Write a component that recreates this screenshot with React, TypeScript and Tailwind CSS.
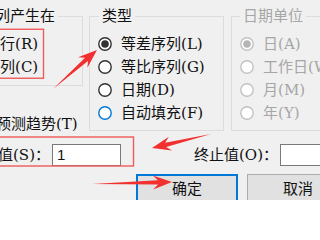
import React from "react";

function Radio({ checked = false, disabled = false, focus = false }: { checked?: boolean; disabled?: boolean; focus?: boolean }) {
  const stroke = disabled ? "#c2c2c2" : focus ? "#0078d7" : "#333333";
  const dot = disabled ? "#b5b5b5" : "#333333";
  return (
    <svg width="14" height="14" viewBox="0 0 14 14" className="shrink-0">
      <circle cx="7" cy="7" r="6.2" fill="#ffffff" stroke={stroke} strokeWidth="1.4" />
      {checked && <circle cx="7" cy="7" r="3.8" fill={dot} />}
    </svg>
  );
}

function Row({ label, hot, checked, disabled, focus }: { label: string; hot: string; checked?: boolean; disabled?: boolean; focus?: boolean }) {
  return (
    <div className={`flex h-[23px] items-center gap-[9px] whitespace-nowrap ${disabled ? "text-[#a6a6a6]" : "text-[#111111]"}`}>
      <Radio checked={checked} disabled={disabled} focus={focus} />
      <span>
        {label}({hot})
      </span>
    </div>
  );
}

function arrowPoints(x1: number, y1: number, x2: number, y2: number) {
  const dx = x2 - x1;
  const dy = y2 - y1;
  const len = Math.hypot(dx, dy);
  const ux = dx / len;
  const uy = dy / len;
  const nx = -uy;
  const ny = ux;
  const H = 19;
  const W = 7;
  const N = 14;
  const w = 2.2;
  const p = (d: number, s: number) => `${(x2 - ux * d + nx * s).toFixed(2)},${(y2 - uy * d + ny * s).toFixed(2)}`;
  return [`${x1},${y1}`, p(N, w), p(H, W), `${x2},${y2}`, p(H, -W), p(N, -w)].join(" ");
}

export default function App() {
  return (
    <div className="relative h-[200px] w-[320px] overflow-hidden bg-[#f0f0f0] font-['DejaVu_Serif','Noto_Sans_CJK_SC',serif] text-[15px] leading-[16px] text-[#111111]">
      {/* top section */}
      <div className="flex items-start pt-[8px]">
        <div className="-ml-[32px] flex w-[115px] shrink-0 flex-col">
          <fieldset className="border border-[#dcdcdc]">
            <legend className="ml-[8px] whitespace-nowrap px-[3px] leading-[16px]">序列产生在</legend>
            <div className="flex flex-col pb-[7px] pl-[8px] pt-[8px]">
              <Row label="行" hot="R" />
              <Row label="列" hot="C" />
            </div>
          </fieldset>
          <div className="mt-[26px] flex h-[23px] items-center gap-[8px] whitespace-nowrap pl-[7px]">
            <span className="h-[13px] w-[13px] shrink-0 border border-[#333333] bg-white" />
            <span>预测趋势(T)</span>
          </div>
        </div>

        <fieldset className="ml-[6px] w-[135px] shrink-0 border border-[#dcdcdc]">
          <legend className="ml-[9px] whitespace-nowrap px-[3px] leading-[16px]">类型</legend>
          <div className="flex flex-col pb-[6px] pl-[8px] pt-[8px]">
            <Row label="等差序列" hot="L" checked />
            <Row label="等比序列" hot="G" />
            <Row label="日期" hot="D" />
            <Row label="自动填充" hot="F" focus />
          </div>
        </fieldset>

        <fieldset className="ml-[7px] w-[130px] shrink-0 border border-[#dcdcdc]">
          <legend className="ml-[8px] whitespace-nowrap px-[3px] leading-[16px] text-[#a6a6a6]">日期单位</legend>
          <div className="flex flex-col pb-[6px] pl-[8px] pt-[8px]">
            <Row label="日" hot="A" checked disabled />
            <Row label="工作日" hot="W" disabled />
            <Row label="月" hot="M" disabled />
            <Row label="年" hot="Y" disabled />
          </div>
        </fieldset>
      </div>

      {/* values row */}
      <div className="mt-[9px] flex h-[22px] items-center whitespace-nowrap">
        <div className="-ml-[32px] flex w-[82px] shrink-0 justify-end">起始值(S)：</div>
        <div className="ml-[2px] flex h-[22px] w-[69px] shrink-0 items-center border border-[#7a7a7a] bg-white pl-[4px] font-['Liberation_Sans',sans-serif] text-[15px]">
          1
        </div>
        <div className="ml-[72px] flex w-[85px] shrink-0 justify-end">终止值(O)：</div>
        <div className="ml-[2px] h-[22px] w-[60px] shrink-0 border border-[#7a7a7a] bg-white" />
      </div>

      {/* buttons */}
      <div className="mt-[8px] flex h-[28px] items-stretch whitespace-nowrap">
        <div className="ml-[136px] flex w-[102px] shrink-0 items-center justify-center border-2 border-[#0078d7] bg-[#e1e1e1] font-['Noto_Sans_CJK_SC',sans-serif] text-[15px]">
          确定
        </div>
        <div className="ml-[9px] flex w-[102px] shrink-0 items-center justify-center border border-[#adadad] bg-[#e1e1e1] font-['Noto_Sans_CJK_SC',sans-serif] text-[15px]">
          取消
        </div>
      </div>

      {/* annotations */}
      <svg className="pointer-events-none absolute left-0 top-0" width="320" height="200" viewBox="0 0 320 200">
        <rect x="-5" y="29.25" width="48.5" height="49" fill="none" stroke="#f05a5a" strokeWidth="1.4" />
        <rect x="-5" y="137" width="138.5" height="29" fill="none" stroke="#f05a5a" strokeWidth="1.4" />
        <polygon points={arrowPoints(53, 89, 97, 50)} fill="#f2302f" />
        <polygon points={arrowPoints(211, 134, 152, 148)} fill="#f2302f" />
        <polygon points={arrowPoints(92, 184, 172, 182)} fill="#f2302f" />
      </svg>
    </div>
  );
}
